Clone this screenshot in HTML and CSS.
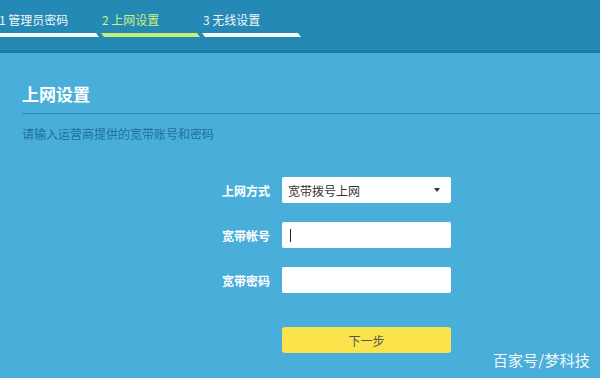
FILE: index.html
```html
<!DOCTYPE html>
<html>
<head>
    <title>上网设置</title>
    <meta charset="utf-8">
    <link rel="stylesheet" href="styles.css">
</head>
<body>
    <div class="steps-bar">
        <div class="step">
            <div class="step-label">1 管理员密码</div>
            <div class="step-line"></div>
        </div>
        <div class="step active">
            <div class="step-label">2 上网设置</div>
            <div class="step-line"></div>
        </div>
        <div class="step">
            <div class="step-label">3 无线设置</div>
            <div class="step-line"></div>
        </div>
    </div>
    <div class="page">
        <h1 class="page-title">上网设置</h1>
        <hr class="page-divider">
        <div class="page-tip">请输入运营商提供的宽带账号和密码</div>
        <div class="form">
            <div class="form-row">
                <label class="form-label">上网方式</label>
                <div class="form-select">
                    <span>宽带拨号上网</span>
                    <span class="select-arrow"></span>
                </div>
            </div>
            <div class="form-row">
                <label class="form-label">宽带帐号</label>
                <div class="form-input"><span class="caret"></span></div>
            </div>
            <div class="form-row">
                <label class="form-label">宽带密码</label>
                <div class="form-input"></div>
            </div>
            <div class="form-row button-row">
                <button class="next-btn">下一步</button>
            </div>
        </div>
        <div class="watermark">百家号/梦科技</div>
    </div>
</body>
</html>
```

FILE: styles.css
```css
html, body {
    margin: 0;
    padding: 0;
    height: 100%;
}
body {
    width: 600px;
    height: 378px;
    overflow: hidden;
    font-family: "Noto Sans CJK SC", "Noto Sans", sans-serif;
    background: #4aaedb;
    display: flex;
    flex-direction: column;
}
.steps-bar {
    height: 50px;
    background: #2589b5;
    border-bottom: 3px solid #1e79a6;
    display: flex;
    gap: 2px;
    flex-shrink: 0;
}
.step {
    width: 99px;
    padding-top: 11px;
}
.step-label {
    font-size: 12px;
    line-height: 18px;
    color: #f2f7fa;
    padding-left: 1px;
    white-space: nowrap;
}
.step:first-child .step-label {
    margin-left: -2px;
}
.step-line {
    height: 4px;
    margin-top: 4px;
    background: #f5f9fb;
    clip-path: polygon(0 0, calc(100% - 3px) 0, 100% 100%, 3px 100%);
}
.step:first-child .step-line {
    clip-path: polygon(0 0, calc(100% - 3px) 0, 100% 100%, 0 100%);
}
.step.active .step-label {
    color: #c9f27c;
}
.step.active .step-line {
    background: #c6ee7c;
}
.page {
    flex: 1;
    position: relative;
    padding: 29px 0 0 22px;
}
.page-title {
    margin: 0;
    font-size: 17px;
    line-height: 24px;
    font-weight: bold;
    color: #fff;
}
.page-divider {
    border: none;
    border-top: 1px solid #2a86b4;
    margin: 7px 0 0 0;
}
.page-tip {
    font-size: 12px;
    line-height: 16px;
    color: #20709e;
    margin-top: 12px;
}
.form {
    margin-top: 35px;
    display: flex;
    flex-direction: column;
    gap: 19px;
}
.form-row {
    display: flex;
    align-items: center;
    gap: 12px;
}
.form-label {
    width: 248px;
    text-align: right;
    font-size: 12px;
    font-weight: bold;
    color: #fff;
}
.form-select, .form-input {
    width: 169px;
    height: 26px;
    background: #fff;
    border-radius: 2px;
    box-sizing: border-box;
    display: flex;
    align-items: center;
    padding: 0 6px;
}
.form-select {
    justify-content: space-between;
    font-size: 12px;
    color: #333;
    padding-right: 11px;
}
.select-arrow {
    width: 0;
    height: 0;
    border-left: 3px solid transparent;
    border-right: 3px solid transparent;
    border-top: 4px solid #333;
}
.caret {
    width: 1px;
    height: 13px;
    background: #222;
    margin-left: 2px;
}
.button-row {
    margin-top: 15px;
    padding-left: 260px;
}
.next-btn {
    width: 169px;
    height: 26px;
    border: none;
    border-radius: 3px;
    background: #fbe34b;
    color: #555;
    font-family: inherit;
    font-size: 12px;
    padding: 0;
}
.watermark {
    position: absolute;
    right: 10px;
    bottom: 8px;
    font-size: 15px;
    color: #f4f9fc;
    letter-spacing: 0.2px;
}
```
